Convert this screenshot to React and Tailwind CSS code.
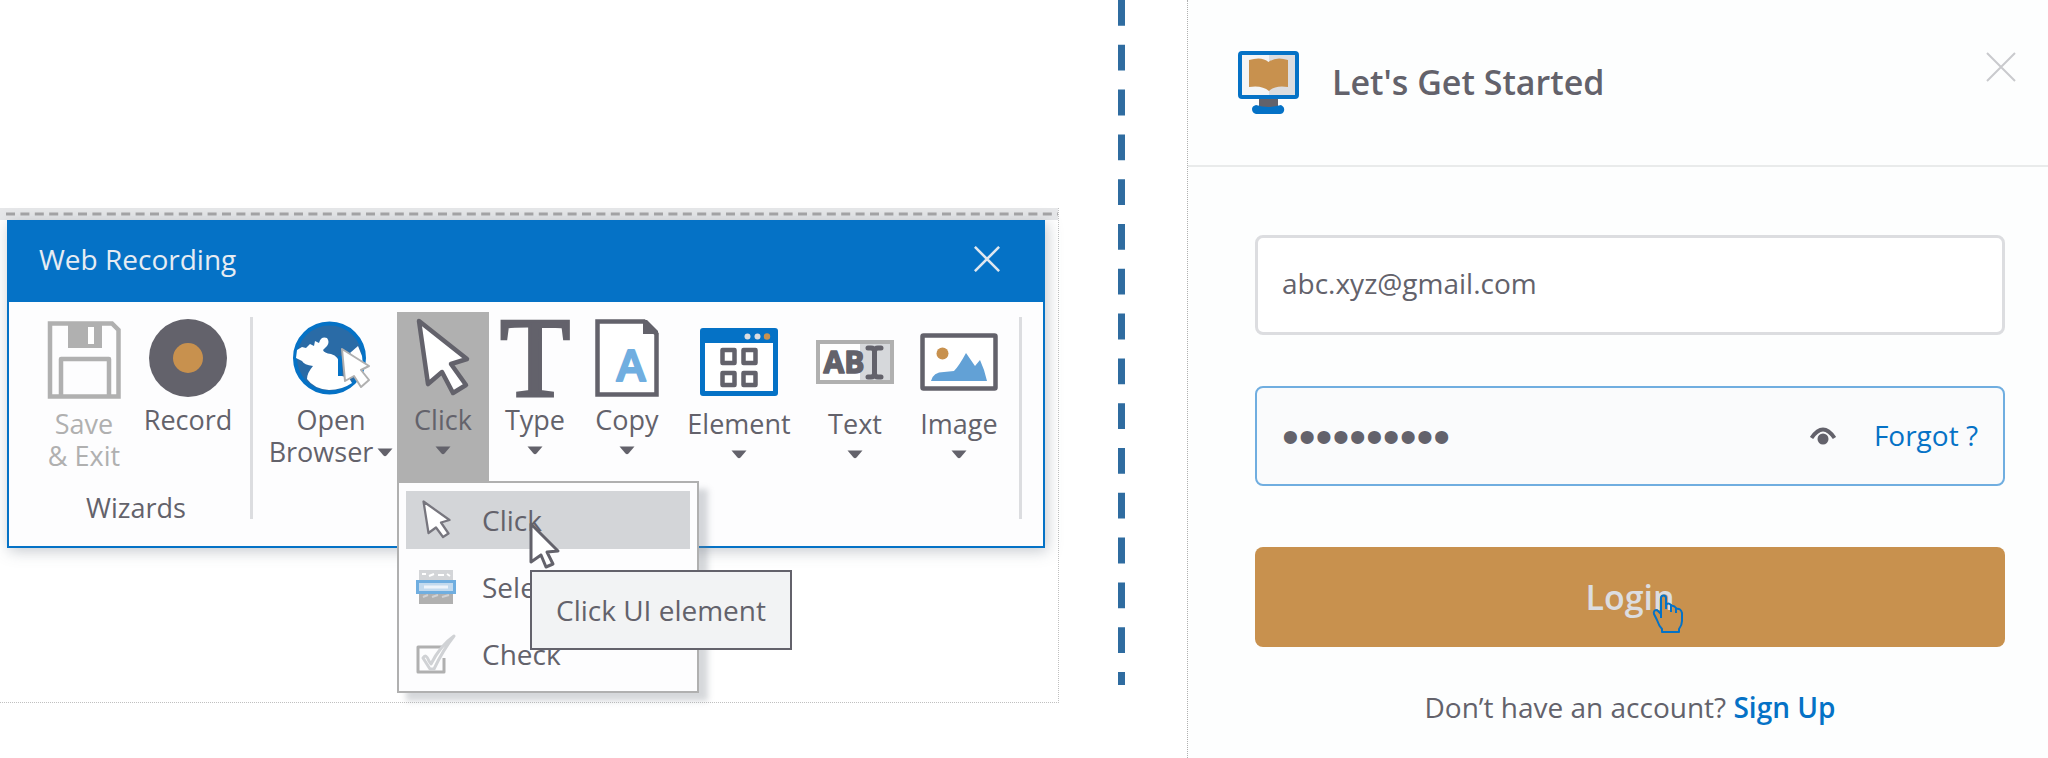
import React from "react";

const INK = "#63626b";
const BLUE = "#0572c6";
const GREY = "#b0b0b0";
const SKY = "#70aee0";
const AMBER = "#c8914e";

function SaveIcon() {
  return (
    <svg width="74" height="78" viewBox="0 0 74 78" fill="none" aria-hidden="true">
      <path d="M3 2.5H65L71.5 9V75.5H3Z" stroke={GREY} strokeWidth="4.5" />
      <path d="M21 3H55V27H21Z" fill={GREY} />
      <rect x="41" y="6" width="6" height="17" fill="#fff" />
      <path d="M14 75V38H62V75" stroke={GREY} strokeWidth="4.5" strokeLinejoin="round" />
    </svg>
  );
}

function RecordIcon() {
  return (
    <svg width="78" height="78" viewBox="0 0 78 78" aria-hidden="true">
      <circle cx="39" cy="39" r="39" fill={INK} />
      <circle cx="39" cy="39" r="15" fill={AMBER} />
    </svg>
  );
}

function GlobeIcon() {
  return (
    <svg width="78" height="76" viewBox="0 0 78 76" aria-hidden="true">
      <circle cx="37.5" cy="38" r="34.5" fill="#2a6ba6" stroke={BLUE} strokeWidth="4" />
      <path
        d="M4 38L5 30L10 27L14 28L18 24L22 26L23 21L27 23Q29 16 35 18Q38 22 35 26L31 30Q32 33 39 34Q47 36 48 46L50 56L57 58L60 63Q50 70 37 70Q22 69 15 59Q15 53 21 46Q12 45 10 41Z"
        fill="#fff"
      />
      <path d="M58 33L66 26L70 36L71 45Z" fill="#fff" />
      <path d="M48 36L48 56" stroke={BLUE} strokeWidth="4" />
      <path
        d="M50 29L77 46L69 50L77 60L69 67L62 56L53 61Z"
        fill="#fff"
        stroke={GREY}
        strokeWidth="2"
        strokeLinejoin="round"
      />
    </svg>
  );
}

function ArrowIcon() {
  return (
    <svg width="64" height="80" viewBox="0 0 64 80" aria-hidden="true">
      <path
        d="M8 3L56 41L40 46L55 67L42 75L31 54L17 66Z"
        fill="#fff"
        stroke={INK}
        strokeWidth="4.5"
        strokeLinejoin="round"
      />
    </svg>
  );
}

function TypeIcon() {
  return (
    <svg width="76" height="80" viewBox="0 0 76 80" className="overflow-visible" aria-hidden="true">
      <text
        x="38"
        y="78"
        textAnchor="middle"
        fontSize="115"
        fontFamily="'Liberation Serif', serif"
        fill={INK}
        stroke={INK}
        strokeWidth="3"
      >
        T
      </text>
    </svg>
  );
}

function CopyIcon() {
  return (
    <svg width="64" height="78" viewBox="0 0 64 78" aria-hidden="true">
      <path d="M2.5 2.5H49L61.500 15V75.500H2.500Z" fill="#fff" stroke={INK} strokeWidth="4.500" />
      <path d="M48 1H52L63 12V15H48Z" fill={INK} />
      <text
        x="36"
        y="62"
        textAnchor="middle"
        fontSize="44"
        fontWeight="600"
        fontFamily="'Open Sans', sans-serif"
        fill={SKY}
        stroke={SKY}
        strokeWidth="2"
        strokeLinejoin="round"
      >
        A
      </text>
    </svg>
  );
}

function ElementIcon() {
  return (
    <svg width="78" height="68" viewBox="0 0 78 68" fill="none" aria-hidden="true">
      <rect width="78" height="68" rx="3" fill={BLUE} />
      <rect x="5" y="15" width="68" height="48" fill="#fff" />
      <circle cx="47.500" cy="8.500" r="3" fill="#dcdde0" />
      <circle cx="57.500" cy="8.500" r="3" fill="#dcdde0" />
      <circle cx="67" cy="8.500" r="3.200" fill={AMBER} />
      <g stroke={INK} strokeWidth="4.500" strokeLinejoin="round">
        <rect x="22.500" y="22" width="12" height="13" />
        <rect x="43.500" y="22" width="12" height="13" />
        <rect x="22.500" y="45" width="12" height="12" />
        <rect x="43.500" y="45" width="12" height="12" />
      </g>
    </svg>
  );
}

function TextIcon() {
  return (
    <svg width="78" height="44" viewBox="0 0 78 44" aria-hidden="true">
      <rect x="2" y="2" width="74" height="40" fill="#fff" stroke={GREY} strokeWidth="4" />
      <rect x="44" y="4" width="30" height="36" fill="#d6d8db" />
      <text
        x="28"
        y="33"
        textAnchor="middle"
        fontSize="30"
        fontWeight="700"
        fontFamily="'Open Sans', sans-serif"
        fill={INK}
        stroke={INK}
        strokeWidth="1.500"
        strokeLinejoin="round"
      >
        AB
      </text>
      <path
        d="M52 8H55Q58 8 58.500 11Q59 8 62 8H65M58.500 10V35M52 37H55Q58 37 58.500 34Q59 37 62 37H65"
        fill="none"
        stroke={INK}
        strokeWidth="5"
        strokeLinecap="round"
      />
    </svg>
  );
}

function ImageIcon() {
  return (
    <svg width="78" height="58" viewBox="0 0 78 58" aria-hidden="true">
      <rect x="2.500" y="2.500" width="73" height="53" rx="1" fill="#fff" stroke={INK} strokeWidth="4.500" />
      <circle cx="22.500" cy="20.500" r="6" fill={AMBER} />
      <path d="M11 48Q13 39 24 39L34 38Q39 33 46 20L55 33L60 27L64 37L67 48Z" fill="#62a1d6" />
    </svg>
  );
}

function Caret() {
  return (
    <svg width="16" height="9" viewBox="0 0 16 9" aria-hidden="true">
      <path d="M0.500 0.500H15.500L9.500 7.500Q8 9 6.500 7.500Z" fill={INK} />
    </svg>
  );
}

function CloseIcon({ size, color, width }) {
  return (
    <svg width={size} height={size} viewBox="0 0 30 30" aria-hidden="true">
      <path d="M1 1L29 29M29 1L1 29" stroke={color} strokeWidth={width} />
    </svg>
  );
}

function Tool({ icon, label, caret = true, low = false, className = "" }) {
  return (
    <button type="button" className={`flex flex-col items-center pt-1.5 ${className}`}>
      <span className="flex h-20 items-center justify-center">{icon}</span>
      <span className={`leading-8 whitespace-nowrap ${low ? "mt-2.5" : "mt-1.5"}`}>{label}</span>
      {caret && (
        <span className="mt-2.5">
          <Caret />
        </span>
      )}
    </button>
  );
}

function MenuItem({ icon, label, active = false }) {
  return (
    <button
      type="button"
      role="menuitem"
      className={`flex h-[58px] items-center text-left ${active ? "bg-[#d3d5d8]" : ""}`}
    >
      <span className="flex w-[60px] justify-center">{icon}</span>
      <span className="ml-4">{label}</span>
    </button>
  );
}

function ClickMenu() {
  return (
    <div
      role="menu"
      className="absolute top-full left-0 z-10 flex w-[302px] flex-col gap-[9px] border-2 border-[#b0b0b0] bg-[#fdfdfe] px-[7px] py-2 text-[28px] shadow-[9px_8px_6px_rgba(120,125,135,0.3)]"
    >
      <MenuItem
        active
        label="Click"
        icon={
          <svg width="32" height="40" viewBox="0 0 64 80" aria-hidden="true">
            <path
              d="M7 3L59 40L42 45L57 67L46 74L32 55L17 66Z"
              fill="#fff"
              stroke="#77767e"
              strokeWidth="4.500"
              strokeLinejoin="round"
            />
          </svg>
        }
      />
      <MenuItem
        label="Select"
        icon={
          <svg width="40" height="36" viewBox="0 0 40 36" aria-hidden="true">
            <rect x="3" y="1" width="34" height="11" fill="#d3d5d8" />
            <path d="M6 5H10M13 7L18 5M22 6H28M31 5L34 7" stroke="#fff" strokeWidth="2" />
            <rect x="3" y="24" width="34" height="11" fill={GREY} />
            <path d="M7 28L12 26M16 28L22 26M26 28L33 26" stroke="#d0d1d4" strokeWidth="2" />
            <rect x="1.500" y="12.500" width="37" height="11" fill="#c3daee" stroke={SKY} strokeWidth="3" />
            <path d="M8 18H32" stroke="#eef4fa" strokeWidth="3" />
          </svg>
        }
      />
      <MenuItem
        label="Check"
        icon={
          <svg width="40" height="40" viewBox="0 0 40 40" fill="none" aria-hidden="true">
            <path d="M27 13H2V38H28V24" stroke={GREY} strokeWidth="3" strokeLinejoin="round" />
            <path
              d="M7 24Q10 19 13 27L15 30Q24 12 38 2Q27 16 18 35L14 35Z"
              fill="#fff"
              stroke="#d0d2d5"
              strokeWidth="3"
              strokeLinejoin="round"
            />
          </svg>
        }
      />
      <div
        role="tooltip"
        className="absolute top-[87px] left-[131px] border-2 border-[#63626b] bg-[#f2f3f4] px-6 py-5 leading-9 whitespace-nowrap"
      >
        Click UI element
      </div>
      <svg className="absolute top-[38px] left-[130px]" width="32" height="48" viewBox="0 0 32 48" aria-hidden="true">
        <path
          d="M2 3L29 30L18 31L24 43L17 46L12 34L2 41Z"
          fill="#fff"
          stroke={INK}
          strokeWidth="3"
          strokeLinejoin="round"
        />
      </svg>
    </div>
  );
}

function Divider() {
  return <div className="mt-[5px] h-[202px] w-[3px] shrink-0 bg-[#dcdde0]" />;
}

function RecordingWindow() {
  return (
    <section className="mt-[208px] h-fit border-r border-b border-dotted border-[#c0c0c0] pb-[154px]">
      <div className="flex h-3 items-center bg-[#e6e7e9]">
        <svg className="w-full" height="4" aria-hidden="true">
          <line x1="6" y1="2" x2="100%" y2="2" stroke="#a2a2a4" strokeWidth="3" strokeDasharray="9 5.4" />
        </svg>
      </div>
      <div className="mr-[13px] ml-[7px] border-2 border-[#0572c6] bg-[#fdfdfe] text-[27px] text-[#63626b] shadow-[2px_3px_14px_rgba(90,100,115,0.35)]">
        <header className="flex h-20 items-center justify-between bg-[#0572c6] pr-[43px] pb-1.5 pl-[30px]">
          <h1 className="text-[28px] text-[#e6ecf3]">Web Recording</h1>
          <button type="button" aria-label="Close recording">
            <CloseIcon size="26" color="#dfe7ef" width="3" />
          </button>
        </header>
        <div className="flex h-[244px] items-start pt-2.5 pl-[29px]">
          <div className="flex flex-col items-center">
            <div className="flex gap-3">
              <Tool
                className="w-[92px] text-[#b0b0b0]"
                icon={
                  <span className="pt-1">
                    <SaveIcon />
                  </span>
                }
                label={
                  <>
                    Save
                    <br />
                    &amp; Exit
                  </>
                }
                caret={false}
                low
              />
              <Tool className="w-[92px]" icon={<RecordIcon />} label="Record" caret={false} />
            </div>
            <div className="mt-5 leading-8">Wizards</div>
          </div>
          <div className="ml-4">
            <Divider />
          </div>
          <div className="ml-3 flex items-start">
            <Tool
              className="w-[132px]"
              icon={<GlobeIcon />}
              caret={false}
              label={
                <>
                  Open
                  <span className="flex items-center gap-1">
                    Browser <Caret />
                  </span>
                </>
              }
            />
            <div className="relative">
              <Tool className="h-[169px] w-[92px] bg-[#b0b0b0]" icon={<ArrowIcon />} label="Click" />
              <ClickMenu />
            </div>
            <Tool className="w-[92px]" icon={<TypeIcon />} label="Type" />
            <Tool className="w-[92px]" icon={<CopyIcon />} label="Copy" />
            <Tool
              className="w-[132px]"
              icon={
                <span className="pt-2">
                  <ElementIcon />
                </span>
              }
              label="Element"
              low
            />
            <Tool
              className="w-[100px]"
              icon={
                <span className="pt-2">
                  <TextIcon />
                </span>
              }
              label="Text"
              low
            />
            <Tool
              className="w-[108px]"
              icon={
                <span className="pt-2">
                  <ImageIcon />
                </span>
              }
              label="Image"
              low
            />
          </div>
          <div className="ml-1.5">
            <Divider />
          </div>
        </div>
      </div>
    </section>
  );
}

function LoginPanel() {
  return (
    <main className="border-l border-dotted border-[#b0b0b0] bg-[#fdfefe] text-[#63626b]">
      <header className="flex h-[167px] items-start justify-between border-b-2 border-[#e9ebeb] pr-8 pl-[50px]">
        <div className="flex items-center gap-8 pt-[51px]">
          <svg width="62" height="63" viewBox="0 0 62 63" aria-hidden="true">
            <rect x="2" y="2" width="57" height="44" rx="2" fill="#f4f5f6" stroke={BLUE} strokeWidth="4" />
            <path d="M31 4H57V44H31Z" fill="#dcdde0" />
            <path d="M11 9Q24 5 30.500 11Q38 5 50 9V36Q37 34 31 40Q24 34 11 36Z" fill={AMBER} />
            <rect x="21" y="48" width="19" height="8" fill={INK} />
            <path d="M18 54Q30 58 43 54Q47 56 46 60Q45 63 42 63H18Q14 62 14 58Q14 55 18 54Z" fill={BLUE} />
          </svg>
          <h2 className="text-[34px] font-semibold">Let's Get Started</h2>
        </div>
        <button type="button" aria-label="Close login" className="mt-[52px]">
          <CloseIcon size="30" color="#c9cacd" width="2" />
        </button>
      </header>
      <form className="mr-[43px] ml-[67px] flex flex-col pt-[68px]" onSubmit={(e) => e.preventDefault()}>
        <input
          type="email"
          aria-label="Email"
          defaultValue="abc.xyz@gmail.com"
          className="h-[100px] rounded-lg border-3 border-[#dcdde0] bg-white px-6 pb-1 text-[28px] outline-none"
        />
        <div className="mt-[51px] flex h-[100px] items-center rounded-lg border-2 border-[#70aee0] bg-[#fafbfc] px-[25px]">
          <input
            type="password"
            aria-label="Password"
            defaultValue="abcdefghij"
            className="h-full min-w-0 flex-1 bg-transparent font-['Liberation_Sans',sans-serif] text-[48px] outline-none"
          />
          <button type="button" aria-label="Show password" className="mr-[38px]">
            <svg width="26" height="18" viewBox="0 0 26 18" aria-hidden="true">
              <path d="M1.500 11Q13 -6 24.500 11" fill="none" stroke={INK} strokeWidth="4" />
              <circle cx="13" cy="12" r="5.500" fill={INK} />
            </svg>
          </button>
          <a href="#forgot" className="pb-0.5 text-[28px] text-[#0572c6]">
            Forgot ?
          </a>
        </div>
        <button
          type="submit"
          className="mt-[61px] h-[100px] rounded-lg bg-[#c8914e] text-[34px] font-semibold text-[#dcdde0]"
        >
          <span className="relative">
            Login
            <svg
              className="absolute right-[-9px] bottom-[-14px]"
              width="32"
              height="40"
              viewBox="0 0 32 40"
              aria-hidden="true"
            >
              <path
                d="M9 24V4Q9 1.500 11.500 1.500Q14 1.500 14 4V15M14 11Q16 8 19 11V18M19 12Q22 11 24 14V19M24 15Q29 14 30 19V27Q30 31 27 35V38H10V35Q7 32 5 26L2 20Q1 16 5 16L9 20"
                fill="none"
                stroke={BLUE}
                strokeWidth="2"
                strokeLinejoin="round"
              />
            </svg>
          </span>
        </button>
        <p className="mt-[39px] text-center text-[28px]">
          Don’t have an account?{" "}
          <a href="#signup" className="font-semibold text-[#0572c6]">
            Sign Up
          </a>
        </p>
      </form>
    </main>
  );
}

export default function App() {
  return (
    <div className="grid min-h-screen grid-cols-[minmax(0,1059fr)_minmax(0,128fr)_minmax(0,861fr)] overflow-hidden bg-white font-['Open_Sans',sans-serif]">
      <RecordingWindow />
      <div className="flex justify-center pr-1">
        <svg width="7" height="685" viewBox="0 0 7 685" aria-hidden="true">
          <line x1="3.500" y1="0" x2="3.500" y2="685" stroke="#2f6ca0" strokeWidth="7" strokeDasharray="25.800 19" />
        </svg>
      </div>
      <LoginPanel />
    </div>
  );
}
